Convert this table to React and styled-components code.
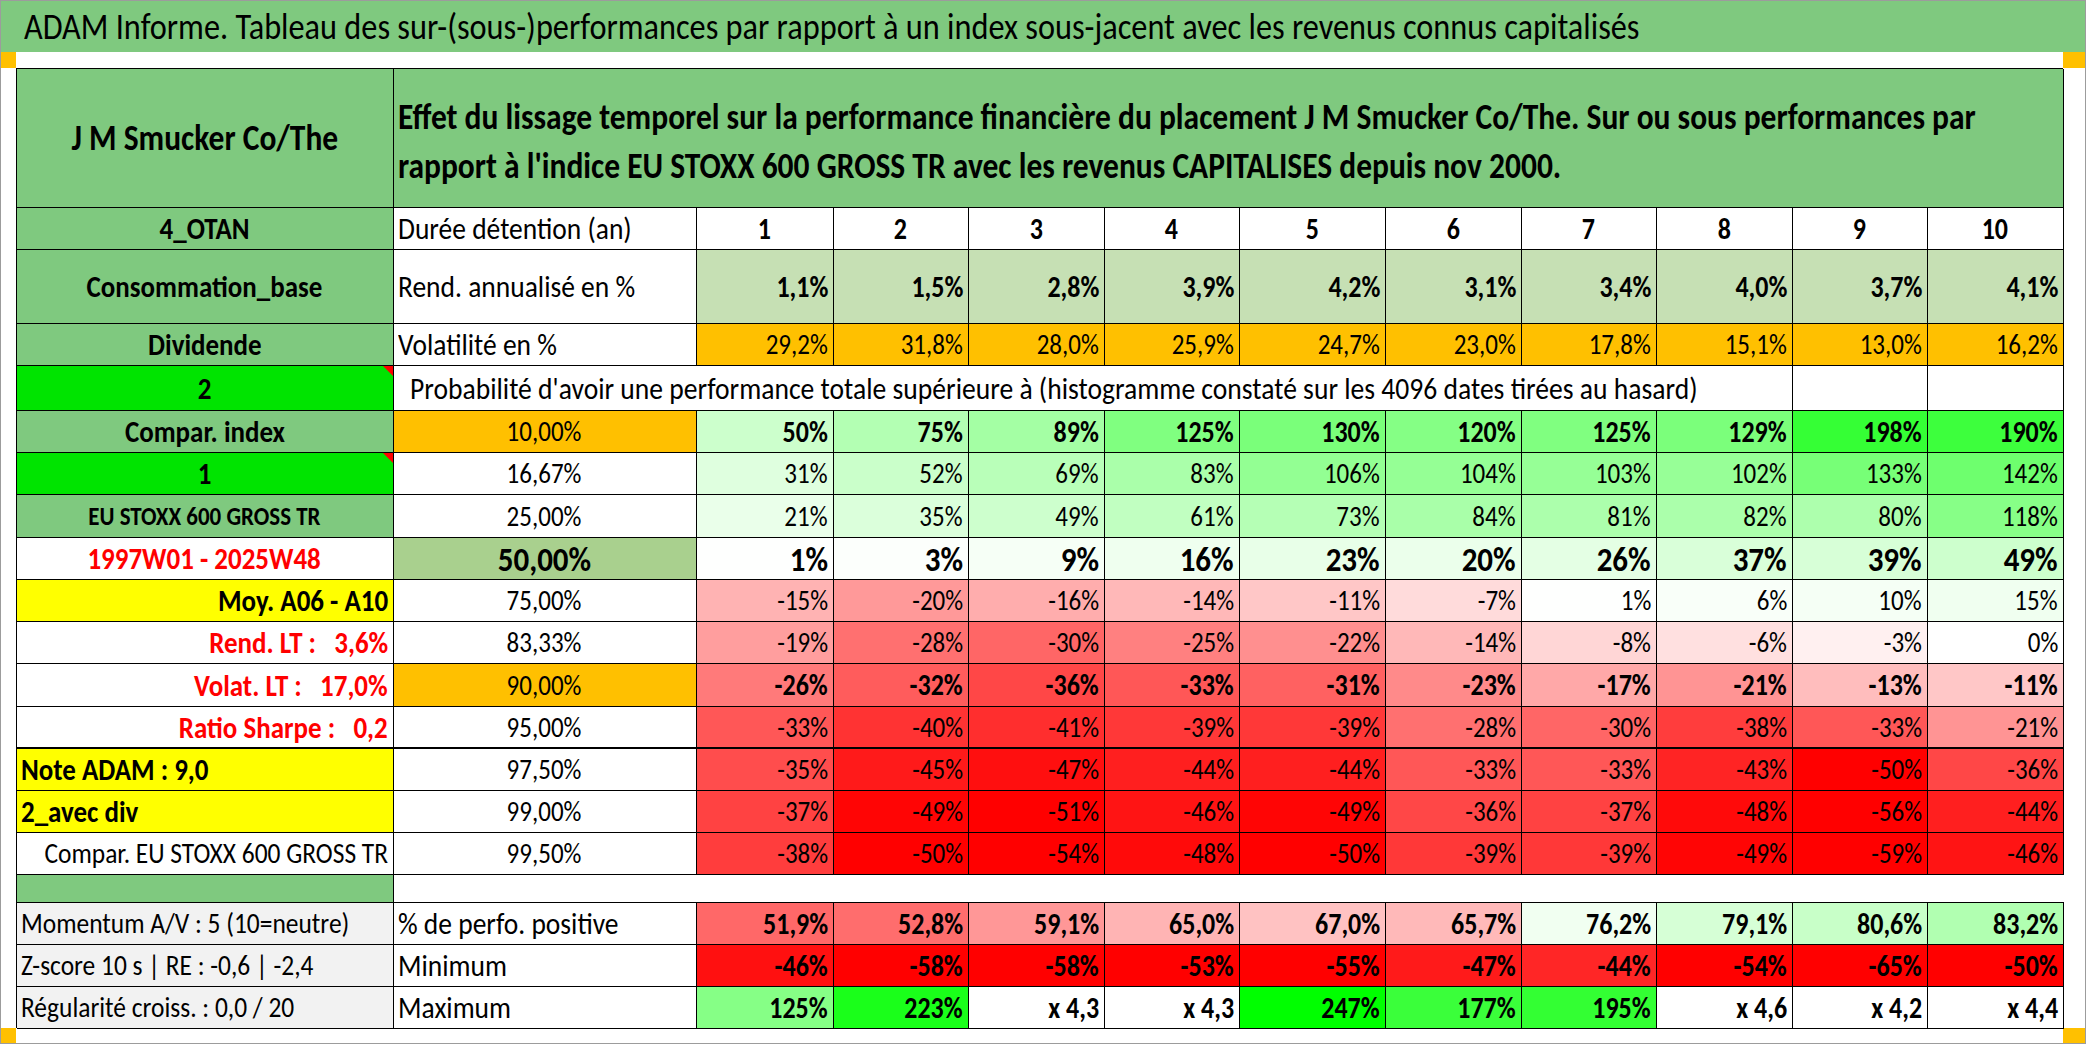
import React from 'react';
import styled, { createGlobalStyle } from 'styled-components';

const GlobalStyle = createGlobalStyle`
  html, body {
    margin: 0;
    padding: 0;
    background: #fff;
  }
  body {
    font-family: Carlito, Calibri, Lato, 'Liberation Sans', sans-serif;
    color: #000;
  }
  * {
    box-sizing: border-box;
  }
`;

const GREEN = '#7fc97f';
const LIME = '#00e400';
const ORANGE = '#ffc000';
const YELLOW = '#ffff00';
const PALE = '#c6e0b4';
const SAGE = '#a9d08e';
const GREY = '#f2f2f2';
const RED = '#ff0000';

// the sheet was captured slightly squeezed, text is narrower than it is tall
const SQ = 0.89;
const NUM = 28.1;
const NUM_BOLD = 29.2;
const LABEL = 30.3;
const CAPTION = 30.9;

const Page = styled.div`
  width: 2086px;
  height: 1044px;
  border: 1px solid #9c9c9c;
  display: grid;
  grid-template-columns: 15px 2047px 1fr;
  grid-template-rows: 51px 16px 960px 1fr;
  background: #fff;
  overflow: hidden;
`;

const TitleBar = styled.div`
  grid-column: 1 / -1;
  background: ${GREEN};
  display: flex;
  align-items: center;
  padding-left: 23px;
  font-size: 36.3px;
  white-space: nowrap;
  overflow: hidden;
`;

const Marker = styled.div`
  grid-column: ${p => p.$col};
  background: ${ORANGE};
`;

const Spacer = styled.div`
  grid-column: 2;
`;

const Sheet = styled.div`
  grid-column: 2;
  display: grid;
  grid-template-columns: 377px 303px 137px 135px 136px 135px 146px 136px 135px 136px 135px 136px;
  grid-template-rows: 139px 42px 74px 42px 45px 42px 42px 43px 42px 42px 42px 43px 42px 42px 42px 42px 28px 42px 42px 42px;
  border-top: 1px solid #000;
  border-left: 1px solid #000;
`;

const justify = { left: 'flex-start', center: 'center', right: 'flex-end' };

const Cell = styled.div`
  grid-column: span ${p => p.$span || 1};
  position: relative;
  display: flex;
  align-items: center;
  justify-content: ${p => justify[p.$align || 'right']};
  padding: 0 ${p => p.$pad || 5}px 0 ${p => p.$padLeft || 4}px;
  background: ${p => p.$bg || '#fff'};
  border-right: ${p => (p.$open ? 'none' : '1px solid #000')};
  border-bottom: ${p => (p.$thick ? 2 : 1)}px solid #000;
  color: ${p => p.$color || '#000'};
  font-size: ${p => p.$size || LABEL}px;
  font-weight: ${p => (p.$bold ? 700 : 400)};
  white-space: pre;
  overflow: hidden;
`;

const Txt = styled.span`
  display: inline-block;
  flex-shrink: 0;
  transform: scaleX(${SQ});
  transform-origin: ${p => p.$origin || 'right'} center;
`;

const HeaderText = styled.div`
  grid-column: span 11;
  display: flex;
  align-items: center;
  padding: 8px 20px 0 4px;
  background: ${GREEN};
  border-right: 1px solid #000;
  border-bottom: 1px solid #000;
  font-size: 35.4px;
  font-weight: 700;
  line-height: 49px;
  overflow: hidden;
`;

const HeaderLines = styled.span`
  display: block;
  flex-shrink: 0;
  width: ${100 / SQ}%;
  transform: scaleX(${SQ});
  transform-origin: left center;
`;

const Flag = styled.span`
  position: absolute;
  top: 0;
  right: 0;
  width: 0;
  height: 0;
  border-left: 10px solid transparent;
  border-top: 10px solid ${RED};
`;

function Box({ children, align = 'right', flag, ...rest }) {
  return (
    <Cell $align={align} {...rest}>
      {children !== undefined && <Txt $origin={align}>{children}</Txt>}
      {flag && <Flag />}
    </Cell>
  );
}

const mix = (t, r, g, b) => {
  const f = c => Math.round(255 + (c - 255) * t);
  return `rgb(${f(r)}, ${f(g)}, ${f(b)})`;
};

const heat = v => (v >= 0 ? mix(Math.min(1, v / 250), 0, 255, 0) : mix(Math.min(1, -v / 50), 255, 0, 0));

const years = [1, 2, 3, 4, 5, 6, 7, 8, 9, 10];
const returns = ['1,1%', '1,5%', '2,8%', '3,9%', '4,2%', '3,1%', '3,4%', '4,0%', '3,7%', '4,1%'];
const vols = ['29,2%', '31,8%', '28,0%', '25,9%', '24,7%', '23,0%', '17,8%', '15,1%', '13,0%', '16,2%'];

const quantiles = [
  { label: 'Compar. index', labelBg: GREEN, align: 'center', bold: true, q: '10,00%', qBg: ORANGE, rowBold: true,
    v: [50, 75, 89, 125, 130, 120, 125, 129, 198, 190] },
  { label: '1', labelBg: LIME, align: 'center', bold: true, flag: true, q: '16,67%',
    v: [31, 52, 69, 83, 106, 104, 103, 102, 133, 142] },
  { label: 'EU STOXX 600 GROSS TR', labelBg: GREEN, align: 'center', bold: true, size: 25.8, q: '25,00%',
    v: [21, 35, 49, 61, 73, 84, 81, 82, 80, 118] },
  { label: '1997W01 - 2025W48', color: RED, align: 'center', bold: true, q: '50,00%', qBg: SAGE, rowBold: true, rowSize: 34.8,
    v: [1, 3, 9, 16, 23, 20, 26, 37, 39, 49] },
  { label: 'Moy. A06 - A10', labelBg: YELLOW, align: 'right', bold: true, q: '75,00%',
    v: [-15, -20, -16, -14, -11, -7, 1, 6, 10, 15] },
  { label: 'Rend. LT :   3,6%', color: RED, align: 'right', bold: true, q: '83,33%',
    v: [-19, -28, -30, -25, -22, -14, -8, -6, -3, 0] },
  { label: 'Volat. LT :   17,0%', color: RED, align: 'right', bold: true, q: '90,00%', qBg: ORANGE, rowBold: true,
    v: [-26, -32, -36, -33, -31, -23, -17, -21, -13, -11] },
  { label: 'Ratio Sharpe :   0,2', color: RED, align: 'right', bold: true, q: '95,00%', thick: true,
    v: [-33, -40, -41, -39, -39, -28, -30, -38, -33, -21] },
  { label: 'Note ADAM : 9,0', labelBg: YELLOW, align: 'left', bold: true, q: '97,50%',
    v: [-35, -45, -47, -44, -44, -33, -33, -43, -50, -36] },
  { label: '2_avec div', labelBg: YELLOW, align: 'left', bold: true, q: '99,00%',
    v: [-37, -49, -51, -46, -49, -36, -37, -48, -56, -44] },
  { label: 'Compar. EU STOXX 600 GROSS TR', align: 'right', size: 28.6, q: '99,50%',
    v: [-38, -50, -54, -48, -50, -39, -39, -49, -59, -46] },
];

const summary = [
  { label: 'Momentum A/V : 5 (10=neutre)', name: '% de perfo. positive',
    v: ['51,9%', '52,8%', '59,1%', '65,0%', '67,0%', '65,7%', '76,2%', '79,1%', '80,6%', '83,2%'],
    bg: ['#ff6868', '#ff6d6d', '#ff9797', '#ffb4b4', '#ffc2c2', '#ffb9b9', '#f1fff1', '#d6ffd6', '#c8ffc8', '#b1ffb1'] },
  { label: 'Z-score 10 s | RE : -0,6 | -2,4', name: 'Minimum',
    v: ['-46%', '-58%', '-58%', '-53%', '-55%', '-47%', '-44%', '-54%', '-65%', '-50%'],
    bg: ['#ff1010', RED, RED, RED, RED, '#ff1a1a', '#ff2626', RED, RED, RED] },
  { label: 'Régularité croiss. : 0,0 / 20', name: 'Maximum',
    v: ['125%', '223%', 'x 4,3', 'x 4,3', '247%', '177%', '195%', 'x 4,6', 'x 4,2', 'x 4,4'],
    bg: ['#86ff86', '#1aff1a', '#fff', '#fff', '#00ff00', '#3aff3a', '#33ff33', '#fff', '#fff', '#fff'] },
];

export default function App() {
  return (
    <>
      <GlobalStyle />
      <Page>
        <TitleBar>
          <Txt $origin="left">
            ADAM Informe. Tableau des sur-(sous-)performances par rapport à un index sous-jacent avec les revenus connus capitalisés
          </Txt>
        </TitleBar>
        <Marker $col={1} />
        <Spacer />
        <Marker $col={3} />

        <Sheet>
          <Box $bg={GREEN} align="center" $bold $size={35.4}>J M Smucker Co/The</Box>
          <HeaderText>
            <HeaderLines>
              Effet du lissage temporel sur la performance financière du placement J M Smucker Co/The. Sur ou sous performances par rapport à l'indice EU STOXX 600 GROSS TR avec les revenus CAPITALISES depuis nov 2000.
            </HeaderLines>
          </HeaderText>

          <Box $bg={GREEN} align="center" $bold>4_OTAN</Box>
          <Box align="left" $size={CAPTION}>Durée détention (an)</Box>
          {years.map(y => (
            <Box key={y} align="center" $bold $size={NUM_BOLD}>{y}</Box>
          ))}

          <Box $bg={GREEN} align="center" $bold>Consommation_base</Box>
          <Box align="left" $size={CAPTION}>Rend. annualisé en %</Box>
          {returns.map((r, i) => (
            <Box key={i} $bg={PALE} $bold $size={NUM_BOLD}>{r}</Box>
          ))}

          <Box $bg={GREEN} align="center" $bold>Dividende</Box>
          <Box align="left" $size={CAPTION}>Volatilité en %</Box>
          {vols.map((r, i) => (
            <Box key={i} $bg={ORANGE} $size={NUM}>{r}</Box>
          ))}

          <Box $bg={LIME} align="center" $bold flag>2</Box>
          <Box $span={9} align="left" $padLeft={16} $size={31}>
            Probabilité d'avoir une performance totale supérieure à (histogramme constaté sur les 4096 dates tirées au hasard)
          </Box>
          <Box />
          <Box />

          {quantiles.map(row => (
            <React.Fragment key={row.q}>
              <Box
                $bg={row.labelBg}
                $color={row.color}
                align={row.align}
                $bold={row.bold}
                $size={row.size}
                $thick={row.thick}
                flag={row.flag}
              >
                {row.label}
              </Box>
              <Box $bg={row.qBg} align="center" $size={row.rowSize || NUM} $bold={!!row.rowSize} $thick={row.thick}>
                {row.q}
              </Box>
              {row.v.map((v, i) => (
                <Box
                  key={i}
                  $bg={heat(v)}
                  $bold={row.rowBold}
                  $size={row.rowSize || (row.rowBold ? NUM_BOLD : NUM)}
                  $thick={row.thick}
                >
                  {v}%
                </Box>
              ))}
            </React.Fragment>
          ))}

          <Box $bg={GREEN} />
          <Box $span={11} $open />

          {summary.map(row => (
            <React.Fragment key={row.name}>
              <Box $bg={GREY} align="left" $size={28.6}>{row.label}</Box>
              <Box align="left" $size={CAPTION}>{row.name}</Box>
              {row.v.map((v, i) => (
                <Box key={i} $bg={row.bg[i]} $bold $size={NUM_BOLD}>{v}</Box>
              ))}
            </React.Fragment>
          ))}
        </Sheet>

        <Marker $col={1} />
        <Spacer />
        <Marker $col={3} />
      </Page>
    </>
  );
}
